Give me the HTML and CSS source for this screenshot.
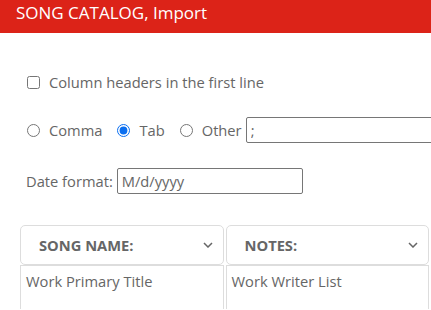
FILE: index.html
```html
<!DOCTYPE html>
<html lang="en">

<head>
    <meta charset="UTF-8" />
    <meta name="viewport" content="width=device-width, initial-scale=1.0" />
    <title>Song Catalog Import</title>
    <link rel="stylesheet" href="styles.css">
</head>

<body>
    <div class="title-bar">SONG CATALOG, Import</div>

    <div class="options">
        <label class="option-row">
            <input type="checkbox" class="check" />
            <span>Column headers in the first line</span>
        </label>

        <div class="option-row separators">
            <label class="radio-item"><input type="radio" name="sep" /> Comma</label>
            <label class="radio-item"><input type="radio" name="sep" checked /> Tab</label>
            <label class="radio-item"><input type="radio" name="sep" /> Other</label>
            <input type="text" class="other-input" value=";" />
        </div>

        <div class="option-row date-row">
            <span>Date format:</span>
            <input type="text" class="date-input" value="M/d/yyyy" />
        </div>
    </div>

    <table class="mapping">
        <thead>
            <tr>
                <th>
                    <div class="col-select">
                        <span>SONG NAME:</span>
                        <svg class="chevron" width="10" height="6" viewBox="0 0 10 6"><path d="M1 1l4 4 4-4" fill="none" stroke="#666" stroke-width="1.5"/></svg>
                    </div>
                </th>
                <th>
                    <div class="col-select">
                        <span>NOTES:</span>
                        <svg class="chevron" width="10" height="6" viewBox="0 0 10 6"><path d="M1 1l4 4 4-4" fill="none" stroke="#666" stroke-width="1.5"/></svg>
                    </div>
                </th>
            </tr>
        </thead>
        <tbody>
            <tr>
                <td>Work Primary Title</td>
                <td>Work Writer List</td>
            </tr>
        </tbody>
    </table>
</body>

</html>
```

FILE: styles.css
```css
body {
    margin: 0;
    font-family: "Open Sans", Arial, sans-serif;
    font-size: 14.7px;
    color: #666;
    background-color: #fff;
    overflow: hidden;
}

.title-bar {
    height: 33px;
    line-height: 26px;
    padding-left: 16px;
    background-color: #dc2318;
    color: #fff;
    font-size: 17px;
}

.options {
    padding: 39px 0 0 26px;
}

.option-row {
    display: flex;
    align-items: center;
    height: 20px;
    white-space: nowrap;
}

.check {
    width: 13px;
    height: 13px;
    margin: 0 9px 0 1px;
}

.separators {
    margin-top: 25px;
    height: 26px;
    overflow: hidden;
}

.radio-item {
    display: flex;
    align-items: center;
    margin-right: 14px;
}

.radio-item input {
    width: 13px;
    height: 13px;
    margin: 0 9px 0 1px;
    accent-color: #0a6ef0;
}

.radio-item:last-of-type {
    margin-right: 4px;
}

.other-input,
.date-input {
    flex: none;
    font-family: "Open Sans", Arial, sans-serif;
    font-size: 14.7px;
    color: #666;
    height: 26px;
    box-sizing: border-box;
    border: 1px solid #767676;
    border-radius: 2px;
    padding: 0 4px;
    margin: 0;
}

.other-input {
    width: 200px;
}

.date-row {
    margin-top: 28px;
}

.date-input {
    width: 186px;
    margin-left: 4px;
}

.mapping {
    margin: 34px 0 0 18px;
    border-collapse: separate;
    border-spacing: 2px 0;
    table-layout: fixed;
    width: 413px;
}

.mapping th {
    padding: 0;
    text-align: left;
}

.col-select {
    display: flex;
    align-items: center;
    justify-content: space-between;
    height: 38px;
    padding: 0 10px 0 18px;
    border: 1px solid #ddd;
    border-radius: 5px;
    font-weight: bold;
    color: #666;
}

.mapping td {
    height: 44px;
    box-sizing: border-box;
    vertical-align: top;
    padding: 5px 5px 0;
    border-left: 1px solid #ddd;
    border-right: 1px solid #ddd;
    border-top: 1px solid #ddd;
}
```
